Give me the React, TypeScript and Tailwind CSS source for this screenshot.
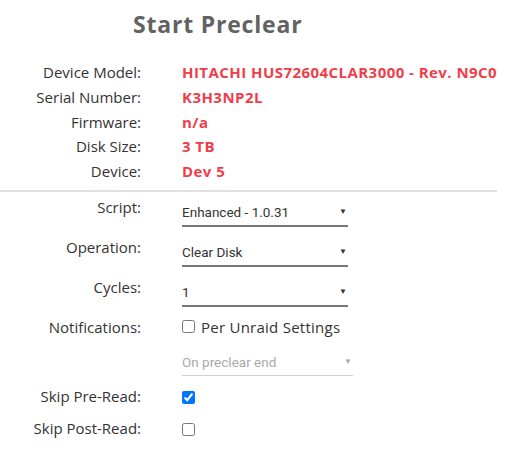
import React from "react";

const INFO = [
  { label: "Device Model:", value: "HITACHI HUS72604CLAR3000 - Rev. N9C0" },
  { label: "Serial Number:", value: "K3H3NP2L" },
  { label: "Firmware:", value: "n/a" },
  { label: "Disk Size:", value: "3 TB" },
  { label: "Device:", value: "Dev 5" },
];

function Select({ value, muted = false, wide = false }: { value: string; muted?: boolean; wide?: boolean }) {
  return (
    <div
      className={`flex items-center justify-between pt-[6px] pb-[4px] font-['Roboto',sans-serif] text-[13.5px] leading-[18px] ${
        wide ? "w-[171px] border-b border-[#d0d0d0] text-[#aaaaaa]" : "w-[166px] border-b-2 border-[#777777] text-[#333333]"
      }`}
    >
      <span>{value}</span>
      <span className={`mr-[1px] text-[8px] ${muted ? "text-[#aaaaaa]" : "text-[#333333]"}`}>▼</span>
    </div>
  );
}

function Row({ label, children, className = "" }: { label: string; children?: React.ReactNode; className?: string }) {
  return (
    <div className={`grid grid-cols-[141px_1fr] gap-x-[41px] ${className}`}>
      <div className="text-right leading-[20px] text-[#333333]">{label}</div>
      <div>{children}</div>
    </div>
  );
}

export default function App() {
  return (
    <div className="h-[455px] w-[509px] bg-white font-['Open_Sans',sans-serif] text-[15px]">
      <h2 className="pt-[8px] pl-[133px] text-[23px] font-bold leading-[32px] tracking-[0.8px] text-[#626262]">
        Start Preclear
      </h2>

      {/* disk details */}
      <div className="mt-[20px]">
        {INFO.map((r) => (
          <div key={r.label} className="grid h-[24.75px] grid-cols-[141px_1fr] items-center gap-x-[41px]">
            <div className="text-right text-[#333333]">{r.label}</div>
            <div className="font-bold tracking-[0.45px] text-[#ef3e4a]">{r.value}</div>
          </div>
        ))}
      </div>

      <hr className="mt-[6px] mr-[12px] border-t-2 border-[#e0e0e0]" />

      {/* preclear options */}
      <div className="mt-[5px]">
        <Row label="Script:" className="h-[40px]">
          <Select value="Enhanced - 1.0.31" />
        </Row>
        <Row label="Operation:" className="h-[40px]">
          <Select value="Clear Disk" />
        </Row>
        <Row label="Cycles:" className="h-[40px]">
          <Select value="1" />
        </Row>
        <Row label="Notifications:" className="h-[30px]">
          <label className="flex h-[20px] items-center gap-[6px] tracking-[0.25px] text-[#333333]">
            <input type="checkbox" className="h-[13px] w-[13px]" readOnly />
            <span>Per Unraid Settings</span>
          </label>
        </Row>
        <Row label="" className="h-[39px]">
          <Select value="On preclear end" muted wide />
        </Row>
        <Row label="Skip Pre-Read:" className="h-[32px]">
          <div className="flex h-[24px] items-center">
            <input type="checkbox" className="h-[13px] w-[13px]" checked readOnly />
          </div>
        </Row>
        <Row label="Skip Post-Read:" className="h-[32px]">
          <div className="flex h-[24px] items-center">
            <input type="checkbox" className="h-[13px] w-[13px]" readOnly />
          </div>
        </Row>
      </div>
    </div>
  );
}
